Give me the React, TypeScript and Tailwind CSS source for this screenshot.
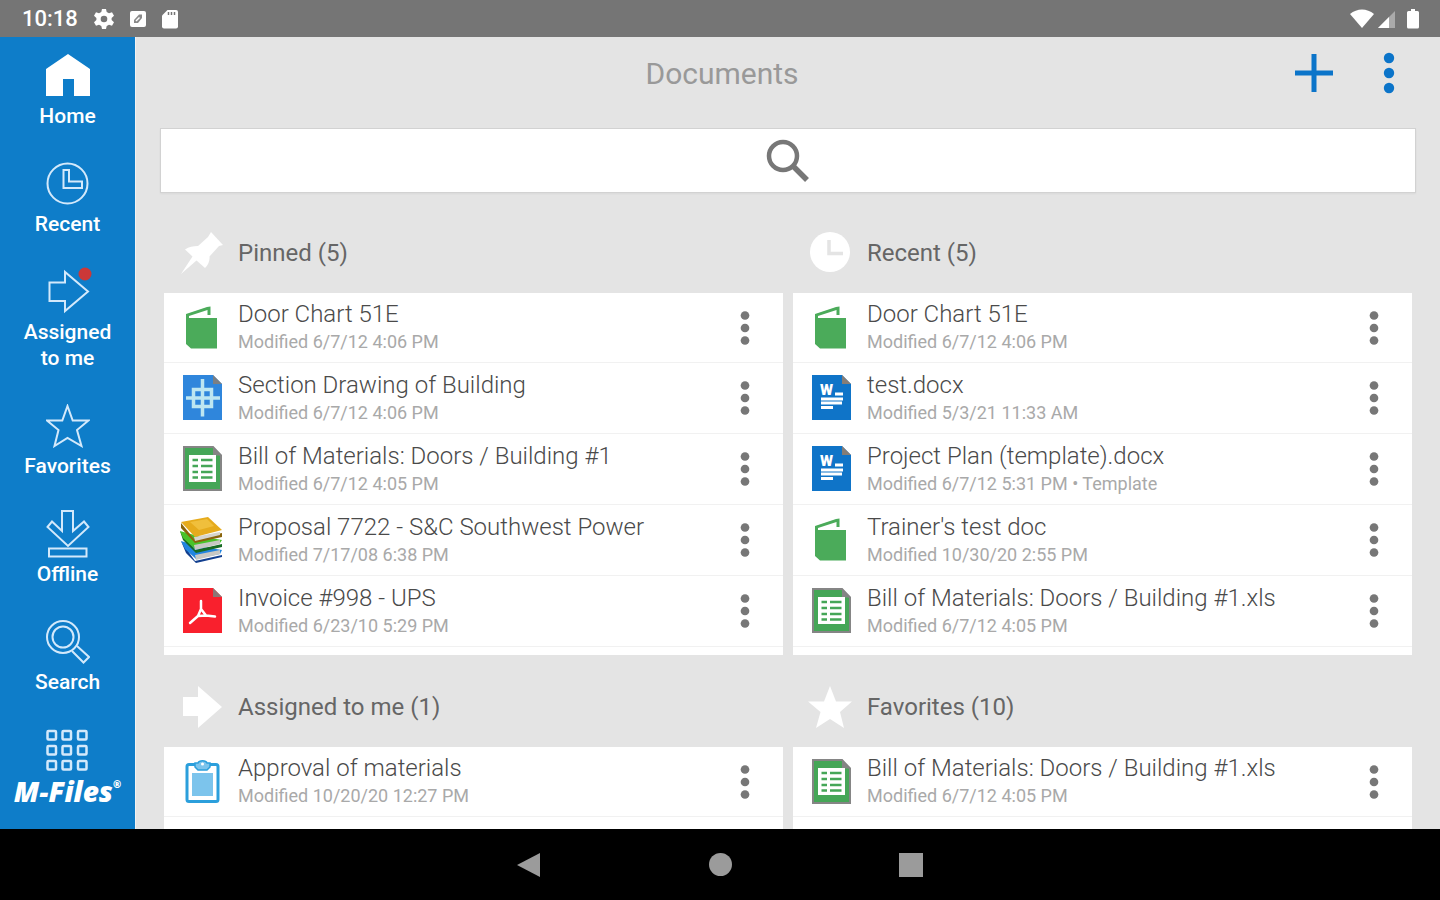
import type { ReactNode } from "react";

type FileKind = "book" | "drawing" | "sheet" | "books" | "pdf" | "word" | "task";

type Doc = { title: string; info: string; kind: FileKind };

const HomeIcon = () => (
  <svg viewBox="0 0 44 44" className="size-11" fill="#fff">
    <path d="M22 0 44 15V42H28V25H17V42H0V15Z" />
  </svg>
);

const RecentIcon = () => (
  <svg viewBox="0 0 44 44" className="size-11" fill="none" stroke="#d3e9fb" strokeWidth="2">
    <circle cx="21.500" cy="21.500" r="20" />
    <path d="M17.500 8H23V19.500H36V26H17.500Z" />
  </svg>
);

const AssignedIcon = () => (
  <svg viewBox="0 0 44 44" className="size-11 overflow-visible" fill="none" stroke="#d3e9fb" strokeWidth="2">
    <path d="M3.500 12.500H19V2L42 21.500 19 41V31H3.500Z" />
    <circle cx="39" cy="4" r="6.500" fill="#cb3838" stroke="none" />
  </svg>
);

const FavoriteIcon = () => (
  <svg viewBox="0 0 44 44" className="size-11" fill="none" stroke="#d3e9fb" strokeWidth="2">
    <path d="m21.500 2 5.200 14.500H42.500L31 26 35.500 42 21.500 34 8.500 42 12.500 26 1 16.500H16.300Z" />
  </svg>
);

const OfflineIcon = () => (
  <svg viewBox="0 0 44 44" className="size-11 overflow-visible" fill="none" stroke="#d3e9fb" strokeWidth="2">
    <path d="M16 -1H27V19L38 9.500 42.500 15 22 34 1.500 15 6 9.500 16 19Z" />
    <path d="M3 36.500H40.500V44.500H3Z" />
  </svg>
);

const SearchIcon = () => (
  <svg viewBox="0 0 44 44" className="size-11" fill="none" stroke="#d3e9fb" strokeWidth="2">
    <circle cx="17" cy="17" r="16" />
    <circle cx="17" cy="17" r="10.500" />
    <path d="M26 31 37.500 42.500 43 37 31 26" />
  </svg>
);

const GridIcon = () => (
  <svg viewBox="0 0 44 44" className="size-11" fill="none" stroke="#d3e9fb" strokeWidth="2.500">
    {[3, 18, 33].map((y) =>
      [1.5, 16.5, 32].map((x) => <rect key={`${x}-${y}`} x={x} y={y} width="8.500" height="8.500" rx="1" />)
    )}
  </svg>
);

const Dots = ({ className }: { className: string }) => (
  <svg viewBox="0 0 12 42" className={className} fill="currentColor">
    <circle cx="6" cy="6" r="5.200" />
    <circle cx="6" cy="21" r="5.200" />
    <circle cx="6" cy="36" r="5.200" />
  </svg>
);

const FileIcon = ({ kind }: { kind: FileKind }) => {
  switch (kind) {
    case "book":
      return (
        <svg viewBox="0 0 44 48" className="h-12 w-11 shrink-0">
          <path d="M6 10 27 3 30.500 2.500V11H27.500V6L9 12V14H37V44.500H11L6 40Z" fill="#4bab5a" />
        </svg>
      );
    case "drawing":
      return (
        <svg viewBox="0 0 44 48" className="h-12 w-11 shrink-0">
          <path d="M3 1H33L42 10V46H3Z" fill="#2f86dc" />
          <path d="M33 1V10H42Z" fill="#7b7f83" />
          <path d="M22.500 5V42.500M6 24H40M13.500 15.500H31.500V32.500H13.500Z" fill="none" stroke="#bde6f1" strokeWidth="3.500" />
        </svg>
      );
    case "sheet":
      return (
        <svg viewBox="0 0 44 48" className="h-12 w-11 shrink-0">
          <path d="M4 2H33L41 10.500V45H4Z" fill="#45a657" stroke="#858585" strokeWidth="2" />
          <path d="M33 1.500V10.500H42Z" fill="#858585" />
          <path d="M9 10H36V37H9Z" fill="#fff" />
          <path d="M12.500 15H18M21 15H32.500M12.500 21H18M21 21H32.500M12.500 27H18M21 27H32.500M12.500 32.500H18M21 32.500H32.500" stroke="#45a657" strokeWidth="2.500" />
        </svg>
      );
    case "books":
      return (
        <svg viewBox="0 0 44 48" className="h-12 w-11 shrink-0">
          <path d="M1 25 15 45 42 39V41L16 47 6 37Z" fill="#123f8f" />
          <path d="M1 25 18 30 42 34 40 38 16 43 5 33Z" fill="#2285e0" />
          <path d="M15 39 40 34 40 38 16 44Z" fill="#c8c8c4" />
          <path d="M0 15 15 34 42 28V31L16 37 3 24Z" fill="#176b24" />
          <path d="M0 15 18 20 42 24 40 27 15 33 3 22Z" fill="#4ac32a" />
          <path d="M14 29 40 24V28L15 34Z" fill="#c8c8c4" />
          <path d="M1 7 14 23 42 17V21L15 27 1 12Z" fill="#8a640c" />
          <path d="M14 21 40 16V19L15 25Z" fill="#d6d4cc" />
          <path d="M1 6 28 1 42 14 15 21Z" fill="#e6ab1c" />
          <path d="M10 6 27 3 34 10 19 14Z" fill="#f0bf3c" />
        </svg>
      );
    case "pdf":
      return (
        <svg viewBox="0 0 44 48" className="h-12 w-11 shrink-0">
          <path d="M3 1H33L42 10V46H3Z" fill="#f9202d" />
          <path d="M33 1V10H42Z" fill="#8b7776" />
          <path d="M21 14V22L18 29 10 36M21 22 26 28.500 35 29.500M18 29 26 28.500" fill="none" stroke="#fff" strokeWidth="2.500" strokeLinecap="round" strokeLinejoin="round" />
        </svg>
      );
    case "word":
      return (
        <svg viewBox="0 0 44 48" className="h-12 w-11 shrink-0">
          <path d="M3 1H33L42 10V46H3Z" fill="#0f74c8" />
          <path d="M33 1V10H42Z" fill="#857d76" />
          <text x="11" y="21" fill="#fff" fontSize="15" fontWeight="900" fontFamily="Roboto, sans-serif">W</text>
          <path d="M26 20H34M12 25H34M12 29H33M12 33.500H24" stroke="#fff" strokeWidth="2.800" />
        </svg>
      );
    case "task":
      return (
        <svg viewBox="0 0 44 48" className="h-12 w-11 shrink-0">
          <rect x="7" y="6.500" width="31" height="37" rx="2" fill="#fff" stroke="#2b9fdc" strokeWidth="3" />
          <path d="M12 15H33V38H12Z" fill="#7cc4ec" />
          <path d="M15 5H18C19 2 26 2 27 5H30V9L27 12H18L15 9Z" fill="#7cc4ec" stroke="#2b9fdc" strokeWidth="1.500" />
          <circle cx="22.500" cy="6" r="1.500" fill="#fff" />
        </svg>
      );
  }
};

const navItems: { label: string; icon: ReactNode }[] = [
  { label: "Home", icon: <HomeIcon /> },
  { label: "Recent", icon: <RecentIcon /> },
  { label: "Assigned to me", icon: <AssignedIcon /> },
  { label: "Favorites", icon: <FavoriteIcon /> },
  { label: "Offline", icon: <OfflineIcon /> },
  { label: "Search", icon: <SearchIcon /> },
];

const sections: { title: string; icon: ReactNode; docs: Doc[] }[] = [
  {
    title: "Pinned (5)",
    icon: <path d="M31 1 43 14 39 15 29.500 25.500C30 30 28 34 25 37L16.500 29.500 1 43 12.500 25.500 5 18.500C9 15.500 13 15 18 15L28 6Z" />,
    docs: [
      { title: "Door Chart 51E", info: "Modified 6/7/12 4:06 PM", kind: "book" },
      { title: "Section Drawing of Building", info: "Modified 6/7/12 4:06 PM", kind: "drawing" },
      { title: "Bill of Materials: Doors / Building #1", info: "Modified 6/7/12 4:05 PM", kind: "sheet" },
      { title: "Proposal 7722 - S&C Southwest Power", info: "Modified 7/17/08 6:38 PM", kind: "books" },
      { title: "Invoice #998 - UPS", info: "Modified 6/23/10 5:29 PM", kind: "pdf" },
    ],
  },
  {
    title: "Recent (5)",
    icon: (
      <>
        <circle cx="21" cy="21" r="20" />
        <path d="M20 9V22.500H34" fill="none" stroke="#e4e4e4" strokeWidth="3.500" />
      </>
    ),
    docs: [
      { title: "Door Chart 51E", info: "Modified 6/7/12 4:06 PM", kind: "book" },
      { title: "test.docx", info: "Modified 5/3/21 11:33 AM", kind: "word" },
      { title: "Project Plan (template).docx", info: "Modified 6/7/12 5:31 PM • Template", kind: "word" },
      { title: "Trainer's test doc", info: "Modified 10/30/20 2:55 PM", kind: "book" },
      { title: "Bill of Materials: Doors / Building #1.xls", info: "Modified 6/7/12 4:05 PM", kind: "sheet" },
    ],
  },
  {
    title: "Assigned to me (1)",
    icon: <path d="M3 12H18V1L42 22 18 43V31H3Z" />,
    docs: [{ title: "Approval of materials", info: "Modified 10/20/20 12:27 PM", kind: "task" }],
  },
  {
    title: "Favorites (10)",
    icon: <path d="m21 1 6 15.500H43L31 27 35 43 21 34 7 43 11.500 27 -1 16.500H15Z" />,
    docs: [{ title: "Bill of Materials: Doors / Building #1.xls", info: "Modified 6/7/12 4:05 PM", kind: "sheet" }],
  },
];

const StatusBar = () => (
  <div className="flex h-[37px] shrink-0 items-center justify-between bg-[#757575] pl-[22px] pr-[21px] text-white">
    <div className="flex items-center gap-4">
      <span className="text-[22px] font-medium leading-6">10:18</span>
      <svg viewBox="0 0 20 20" className="size-5">
        <path d="M8 0H12L12.700 3 15 4.300 18 3.300 20 6.800 17.600 9V11L20 13.200 18 16.700 15 15.700 12.700 17 12 20H8L7.300 17 5 15.700 2 16.700 0 13.200 2.400 11V9L0 6.800 2 3.300 5 4.300 7.300 3Z" fill="#fff" />
        <circle cx="10" cy="10" r="3.300" fill="#757575" />
      </svg>
      <svg viewBox="0 0 16 16" className="size-4">
        <rect width="16" height="16" rx="2" fill="#fff" />
        <path d="M4 12V9L9 3.500H12V7L8 12Z" fill="#8a8a8a" />
        <path d="M6 10 9.500 6.500" stroke="#fff" strokeWidth="1.500" />
      </svg>
      <svg viewBox="0 0 16 20" className="h-5 w-4">
        <path d="M5.500 1H14Q16 1 16 3V17.500Q16 19.500 14 19.500H2Q0 19.500 0 17.500V6.500Z" fill="#fff" />
        <path d="M6.500 3V6M9.500 3V6M12.500 3V6" stroke="#757575" strokeWidth="1.500" />
      </svg>
    </div>
    <div className="flex items-center gap-[3px]">
      <svg viewBox="0 0 26 20" className="h-5 w-[26px]" fill="#fff">
        <path d="M1 5C8 -1 18 -1 25 5L13 19Z" />
      </svg>
      <svg viewBox="0 0 18 20" className="h-5 w-[18px]">
        <path d="M0 19 17 2V19Z" fill="#aaa" />
        <path d="M0 19 11 8V19Z" fill="#fff" />
      </svg>
      <svg viewBox="0 0 12 20" className="ml-2 h-5 w-3" fill="#fff">
        <path d="M4 0H8V2H10.500Q12 2 12 3.500V18Q12 19.500 10.500 19.500H1.500Q0 19.500 0 18V3.500Q0 2 1.500 2H4Z" />
      </svg>
    </div>
  </div>
);

const Sidebar = () => (
  <nav className="flex w-[136px] shrink-0 flex-col items-center gap-[33px] border-r border-[#f2f2f2] bg-[#0e7dc9] pt-[17px] text-white">
    {navItems.map((item) => (
      <a key={item.label} href="#" className="flex w-[104px] flex-col items-center gap-[5px] text-center text-[21px] font-medium leading-[26px]">
        {item.icon}
        {item.label}
      </a>
    ))}
    <a href="#" className="flex flex-col items-center gap-1 font-['Open_Sans',sans-serif] text-[28px] font-extrabold italic leading-[30px]">
      <GridIcon />
      <span className="flex">
        M-Files<span className="text-[10px] leading-4">®</span>
      </span>
    </a>
  </nav>
);

const Section = ({ title, icon, docs }: { title: string; icon: ReactNode; docs: Doc[] }) => (
  <section className="flex flex-col">
    <div className="flex h-[92px] items-center gap-[14px] pl-4 pt-3">
      <svg viewBox="0 0 44 44" className="size-11 overflow-visible" fill="#fff">{icon}</svg>
      <h2 className="text-2xl text-[#666]">{title}</h2>
    </div>
    <ul className="flex-1 bg-white pb-2">
      {docs.map((doc) => (
        <li key={doc.title} className="flex h-[71px] items-center gap-[14px] border-b border-[#f1f1f1] px-4 first:h-[70px]">
          <FileIcon kind={doc.kind} />
          <div className="min-w-0 flex-1 whitespace-nowrap pt-px">
            <div className="text-2xl font-light leading-7 text-[#4a4a4a]">{doc.title}</div>
            <div className="text-lg leading-7 text-[#a9a9a9]">{doc.info}</div>
          </div>
          <button type="button" aria-label={`Actions for ${doc.title}`} className="flex w-11 justify-center text-[#777]">
            <Dots className="h-9 w-[10px]" />
          </button>
        </li>
      ))}
    </ul>
  </section>
);

const App = () => {
  return (
    <div className="flex h-screen flex-col overflow-hidden font-['Roboto',sans-serif]">
      <StatusBar />
      <div className="flex min-h-0 flex-1">
        <Sidebar />
        <main className="flex min-w-0 flex-1 flex-col overflow-hidden bg-[#e4e4e4]">
          <header className="flex h-[72px] shrink-0 items-center pl-6 pr-[21px]">
            <h1 className="flex-1 text-center text-[30px] text-[#999]">Documents</h1>
            <div className="flex gap-[15px] text-[#0b74c9]">
              <button type="button" aria-label="Add" className="flex w-[60px] items-center justify-center">
                <svg viewBox="0 0 38 38" className="size-[38px]" stroke="currentColor" strokeWidth="5">
                  <path d="M19 0V38M0 19H38" />
                </svg>
              </button>
              <button type="button" aria-label="More" className="flex w-[60px] justify-center">
                <Dots className="h-[42px] w-3" />
              </button>
            </div>
          </header>

          <label className="relative mx-6 mt-[19px] block shrink-0">
            <input type="search" aria-label="Search documents" className="block h-[65px] w-full border border-[#d2d2d2] bg-white px-4 text-2xl shadow-xs outline-none" />
            <svg viewBox="0 0 44 44" className="pointer-events-none absolute inset-0 m-auto size-11" fill="none" stroke="#777" strokeWidth="4.500">
              <circle cx="17" cy="17" r="14" />
              <path d="M27 27 41 41" strokeWidth="5.500" />
            </svg>
          </label>

          {/* The last cards run down to the bottom edge */}
          <div className="mx-7 mt-2 grid flex-1 grid-cols-2 grid-rows-[auto_1fr] gap-x-[10px]">
            {sections.map((section) => (
              <Section key={section.title} {...section} />
            ))}
          </div>
        </main>
      </div>

      {/* System navigation */}
      <div className="flex h-[71px] shrink-0 items-center justify-center gap-[143px] bg-black">
        <button type="button" aria-label="Back" className="flex size-12 items-center justify-center">
          <svg viewBox="0 0 24 26" className="h-[26px] w-6" fill="#9b9b9b">
            <path d="M0 13 23 1V25Z" />
          </svg>
        </button>
        <button type="button" aria-label="Home screen" className="flex size-12 items-center justify-center">
          <span className="size-[23px] rounded-full bg-[#9b9b9b]" />
        </button>
        <button type="button" aria-label="Overview" className="flex size-12 items-center justify-center">
          <span className="size-6 bg-[#9b9b9b]" />
        </button>
      </div>
    </div>
  );
};

export default App;
